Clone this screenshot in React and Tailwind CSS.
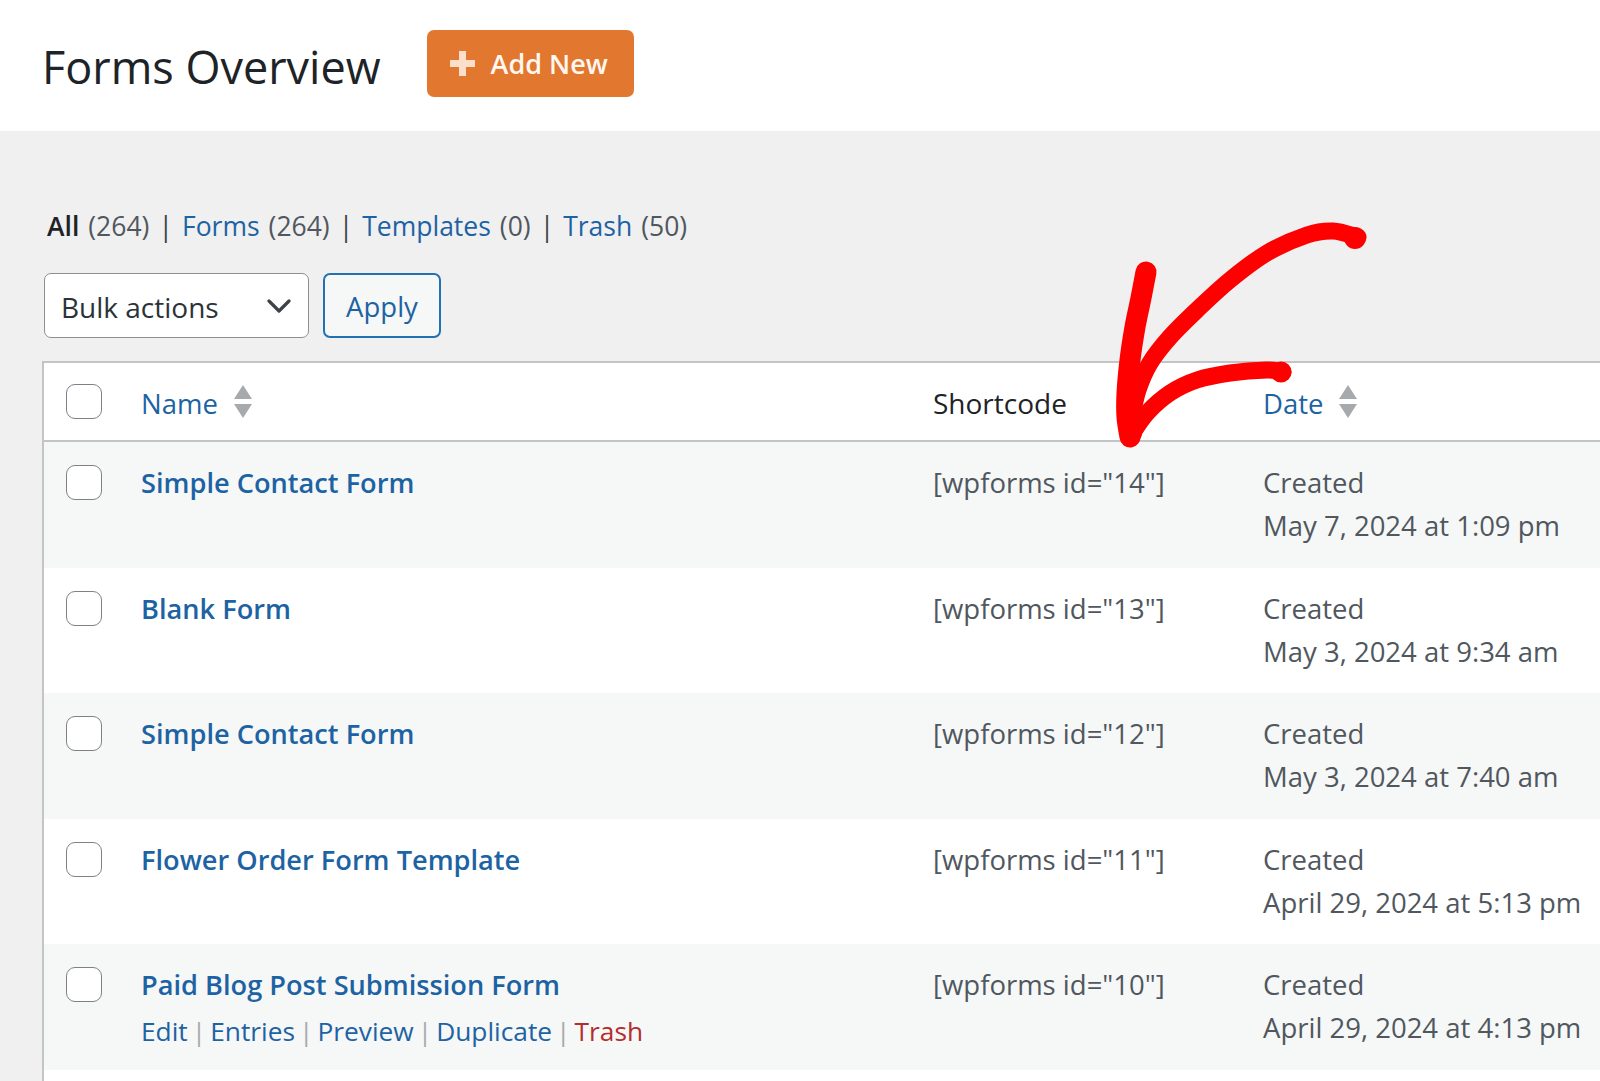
import React from "react";

const rows = [
  { name: "Simple Contact Form", id: 14, date: "May 7, 2024 at 1:09 pm" },
  { name: "Blank Form", id: 13, date: "May 3, 2024 at 9:34 am" },
  { name: "Simple Contact Form", id: 12, date: "May 3, 2024 at 7:40 am" },
  { name: "Flower Order Form Template", id: 11, date: "April 29, 2024 at 5:13 pm" },
  { name: "Paid Blog Post Submission Form", id: 10, date: "April 29, 2024 at 4:13 pm", actions: true },
];

function smooth(pts) {
  let d = `M${pts[0][0]} ${pts[0][1]}`;
  for (let i = 0; i < pts.length - 1; i++) {
    const p0 = pts[i - 1] || pts[i];
    const p1 = pts[i];
    const p2 = pts[i + 1];
    const p3 = pts[i + 2] || p2;
    const c1 = [p1[0] + (p2[0] - p0[0]) / 6, p1[1] + (p2[1] - p0[1]) / 6];
    const c2 = [p2[0] - (p3[0] - p1[0]) / 6, p2[1] - (p3[1] - p1[1]) / 6];
    d += ` C${c1[0].toFixed(1)} ${c1[1].toFixed(1)} ${c2[0].toFixed(1)} ${c2[1].toFixed(1)} ${p2[0]} ${p2[1]}`;
  }
  return d;
}

const upper = [
  [1358, 237], [1333, 231], [1307, 235], [1267, 253], [1230, 280], [1197, 310],
  [1170, 337], [1150, 363], [1138, 390], [1132, 417], [1130, 437],
];
const vertical = [
  [1146, 272], [1141, 298], [1135, 327], [1130, 360], [1127, 393], [1127, 417], [1130, 437],
];
const lower = [
  [1130, 437], [1147, 413], [1170, 393], [1197, 380], [1230, 373], [1267, 370], [1283, 372],
];

const LINK = "text-[#1d63a3]";

function SortArrows() {
  return (
    <svg width="18" height="34" viewBox="0 0 18 34" className="shrink-0">
      <polygon points="9,0 18,14 0,14" fill="#a7aaad" />
      <polygon points="0,19 18,19 9,33" fill="#a7aaad" />
    </svg>
  );
}

function Checkbox() {
  return <div className="w-[36px] h-[35px] rounded-[9px] border-[1.5px] border-[#7e8288] bg-white shrink-0" />;
}

function Sep({ className }) {
  return <span className={className}>|</span>;
}

export default function App() {
  return (
    <div className="relative w-[1600px] h-[1081px] overflow-hidden bg-[#f0f0f1] font-['Open_Sans','Noto_Sans',sans-serif] text-[#3c434a]">
      {/* Header */}
      <div className="h-[131px] bg-white flex items-center pl-[42px]">
        <h1 className="text-[45px] leading-[60px] font-normal text-[#1d2327] mt-[2px]">Forms Overview</h1>
        <button className="ml-[46px] w-[207px] h-[67px] rounded-[7px] bg-[#e27730] flex items-center pl-[23px] gap-[16px] mt-[-4px]">
          <svg width="25" height="25" viewBox="0 0 25 25">
            <rect x="9" y="0" width="7" height="25" fill="#fbdfcb" />
            <rect x="0" y="9" width="25" height="7" fill="#fbdfcb" />
          </svg>
          <span className="text-[27px] leading-[40px] font-semibold text-[#fff7f0]">Add New</span>
        </button>
      </div>

      {/* Body */}
      <div className="pl-[42px]">
        {/* Views */}
        <div className="mt-[75px] pl-[5px] flex items-center h-[40px] text-[26.5px] leading-[40px] text-[#50575e]">
          <span className="font-semibold text-[#1d2327]">All</span>
          <span className="ml-[9px]">(264)</span>
          <Sep className="mx-[9px] text-[#3c434a]" />
          <span className={LINK}>Forms</span>
          <span className="ml-[9px]">(264)</span>
          <Sep className="mx-[9px] text-[#3c434a]" />
          <span className={LINK}>Templates</span>
          <span className="ml-[9px]">(0)</span>
          <Sep className="mx-[9px] text-[#3c434a]" />
          <span className={LINK}>Trash</span>
          <span className="ml-[9px]">(50)</span>
        </div>

        {/* Bulk actions */}
        <div className="mt-[27px] flex items-center gap-[14px] ml-[2px]">
          <div className="w-[265px] h-[65px] rounded-[7px] border-[1.5px] border-[#8c8f94] bg-white flex items-center justify-between pl-[16px] pr-[17px]">
            <span className="text-[28px] leading-[40px] text-[#2c3338] mt-[3px]">Bulk actions</span>
            <svg width="24" height="14" viewBox="0 0 24 14">
              <polyline points="2,2 12,12 22,2" fill="none" stroke="#3c434a" strokeWidth="3.2" strokeLinecap="round" strokeLinejoin="round" />
            </svg>
          </div>
          <div className="w-[118px] h-[65px] rounded-[7px] border-2 border-[#2271b1] bg-[#f6f7f7] flex items-center justify-center">
            <span className="text-[27.5px] leading-[40px] text-[#1d63a3] mt-[3px]">Apply</span>
          </div>
        </div>

        {/* Table */}
        <div className="mt-[23px] w-[1600px] border-l-2 border-t-2 border-[#c3c4c7] bg-white">
          {/* Header row */}
          <div className="h-[79px] flex items-center border-b-2 border-[#c3c4c7] bg-white text-[27.5px] leading-[40px]">
            <div className="w-[97px] pl-[22px] flex items-center">
              <Checkbox />
            </div>
            <div className="w-[792px] flex items-center gap-[16px]">
              <span className={`${LINK} mt-[4px]`}>Name</span>
              <SortArrows />
            </div>
            <div className="w-[330px]">
              <span className="text-[#1d2327] text-[28px] inline-block mt-[4px]">Shortcode</span>
            </div>
            <div className="flex items-center gap-[16px]">
              <span className={`${LINK} mt-[4px]`}>Date</span>
              <SortArrows />
            </div>
          </div>

          {rows.map((r, i) => (
            <div
              key={r.id}
              className={`h-[125.5px] flex items-start ${i % 2 === 0 ? "bg-[#f6f7f7]" : "bg-white"}`}
            >
              <div className="w-[97px] pl-[22px] pt-[23px]">
                <Checkbox />
              </div>
              <div className="w-[792px] pt-[19px]">
                <div className={`text-[27.2px] leading-[43px] font-semibold ${LINK}`}>{r.name}</div>
                {r.actions && (
                  <div className="mt-[4px] flex items-center text-[26.3px] leading-[43px]">
                    <span className={LINK}>Edit</span>
                    <Sep className="mx-[4px] text-[#a7aaad]" />
                    <span className={LINK}>Entries</span>
                    <Sep className="mx-[4px] text-[#a7aaad]" />
                    <span className={LINK}>Preview</span>
                    <Sep className="mx-[4px] text-[#a7aaad]" />
                    <span className={LINK}>Duplicate</span>
                    <Sep className="mx-[4px] text-[#a7aaad]" />
                    <span className="text-[#b32d2e]">Trash</span>
                  </div>
                )}
              </div>
              <div className="w-[330px] pt-[19px] text-[27.5px] leading-[43px] text-[#50575e]">
                [wpforms id="{r.id}"]
              </div>
              <div className="pt-[19px] text-[27.5px] leading-[43px] text-[#50575e]">
                <div>Created</div>
                <div>{r.date}</div>
              </div>
            </div>
          ))}
          <div className="h-[60px] bg-white" />
        </div>
      </div>

      {/* Hand-drawn red arrow annotation */}
      <svg className="absolute left-0 top-0 pointer-events-none" width="1600" height="1081" viewBox="0 0 1600 1081">
        <path d={smooth(upper)} fill="none" stroke="#fe0000" strokeWidth="17" strokeLinecap="round" strokeLinejoin="round" />
        <path d={smooth(vertical)} fill="none" stroke="#fe0000" strokeWidth="21" strokeLinecap="round" strokeLinejoin="round" />
        <path d={smooth(lower)} fill="none" stroke="#fe0000" strokeWidth="17" strokeLinecap="round" strokeLinejoin="round" />
        <circle cx="1355" cy="238" r="11" fill="#fe0000" />
        <circle cx="1281" cy="372" r="10.5" fill="#fe0000" />
        <circle cx="1131" cy="433" r="11" fill="#fe0000" />
      </svg>
    </div>
  );
}
